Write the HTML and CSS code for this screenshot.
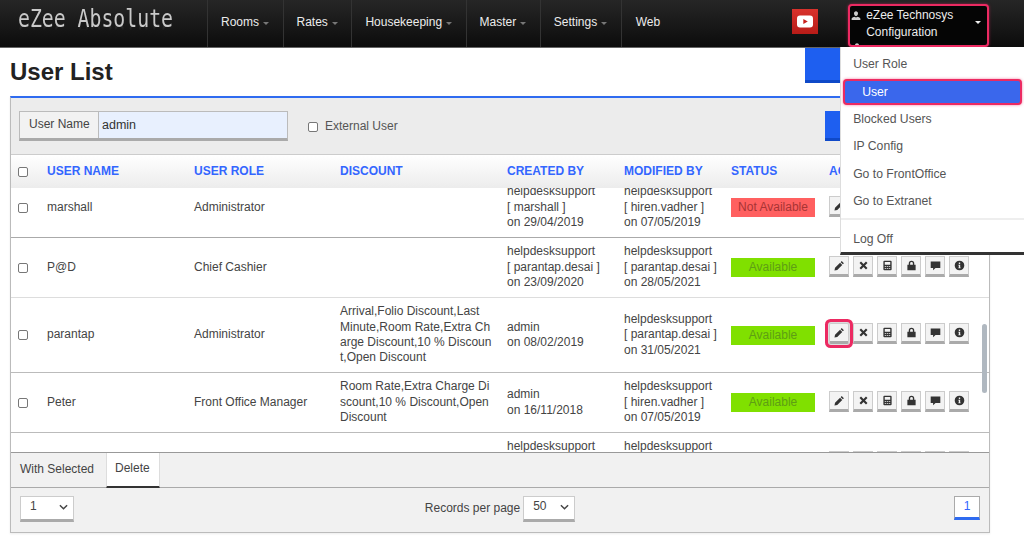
FILE: index.html
```html
<!DOCTYPE html>
<html lang="en">
<head>
<meta charset="utf-8">
<title>User List</title>
<link rel="stylesheet" href="styles.css">
</head>
<body>
<svg class="defs" width="0" height="0" aria-hidden="true">
  <symbol id="i-edit" viewBox="0 0 16 16"><path d="M11.2 1.6l3.2 3.2-1.5 1.5-3.2-3.2zM8.8 4l3.2 3.2-7.3 7.3-4 .8.8-4z"/></symbol>
  <symbol id="i-x" viewBox="0 0 16 16"><path d="M4.4 2.2L8 5.800l3.600-3.600 2.200 2.200L10.200 8l3.600 3.600-2.200 2.200L8 10.200l-3.600 3.600-2.200-2.200L5.800 8 2.200 4.400z"/></symbol>
  <symbol id="i-calc" viewBox="0 0 16 16"><path fill-rule="evenodd" d="M3.500 1h9A1.500 1.500 0 0 1 14 2.500v11a1.500 1.500 0 0 1-1.500 1.500h-9A1.500 1.500 0 0 1 2 13.500v-11A1.500 1.500 0 0 1 3.500 1zM4 3v4h8V3zM4 9v1.200h2V9zm3 0v1.200h2V9zm3 0v1.200h2V9zM4 11.500v1.200h2v-1.200zm3 0v1.200h2v-1.200zm3 0v1.200h2v-1.200z"/></symbol>
  <symbol id="i-lock" viewBox="0 0 16 16"><path fill-rule="evenodd" d="M4 7V5a4 4 0 0 1 8 0v2h2v8H2V7zm2 0h4V5a2 2 0 0 0-4 0z"/></symbol>
  <symbol id="i-chat" viewBox="0 0 16 16"><path d="M1 2h14v9.500H8l-3.500 3.500v-3.500H1z"/></symbol>
  <symbol id="i-info" viewBox="0 0 16 16"><path fill-rule="evenodd" d="M8 1a7 7 0 1 1 0 14A7 7 0 0 1 8 1zM7 3.500v2.200h2V3.500zM6.500 7v1.200H7v2.600h-.6V12h3.200v-1.200H9V7z"/></symbol>
  <symbol id="i-user" viewBox="0 0 16 16"><path d="M8 1c2 0 3.200 1.500 3.200 3.500S10 9 8 9 4.800 6.500 4.800 4.500 6 1 8 1zM1 15v-2c0-1.500 3-2.500 4.500-3.200.8.600 1.600.9 2.500.9s1.700-.3 2.500-.9C12 10.500 15 11.500 15 13v2z"/></symbol>
  <symbol id="i-chev" viewBox="0 0 10 6"><path d="M1 1l4 4 4-4" fill="none" stroke="currentColor" stroke-width="1.600"/></symbol>
</svg>

<header class="topbar">
  <div class="logo"><span class="logo-text">eZee Absolute</span></div>
  <nav class="nav">
    <a class="nav-item">Rooms<i class="caret"></i></a>
    <a class="nav-item">Rates<i class="caret"></i></a>
    <a class="nav-item">Housekeeping<i class="caret"></i></a>
    <a class="nav-item">Master<i class="caret"></i></a>
    <a class="nav-item">Settings<i class="caret"></i></a>
    <a class="nav-item nav-last">Web</a>
  </nav>
  <div class="yt">
    <svg viewBox="0 0 26 25" width="26" height="25"><rect x="5" y="6.500" width="16" height="12" rx="3" fill="#fff"/><path d="M11.300 10l4.500 2.500-4.500 2.500z" fill="#c8201c"/></svg>
  </div>
  <div class="user-menu">
    <div class="user-box">
      <svg class="user-icon"><use href="#i-user"/></svg>
      <div class="user-lines"><div>eZee Technosys</div><div>Configuration</div></div>
      <i class="user-caret"></i>
      <svg class="user-icon-clipped"><use href="#i-user"/></svg>
    </div>
    <ul class="dropdown">
      <li>User Role</li>
      <li class="active">User</li>
      <li>Blocked Users</li>
      <li>IP Config</li>
      <li>Go to FrontOffice</li>
      <li>Go to Extranet</li>
      <li class="sep">Log Off</li>
    </ul>
  </div>
</header>

<main class="main">
  <div class="title-row">
    <h1>User List</h1>
    <div class="add-btn"></div>
  </div>
  <section class="panel">
    <div class="filter">
      <div class="field"><span class="field-label">User Name</span><span class="field-input">admin</span></div>
      <label class="ext"><input type="checkbox" class="cb">External User</label>
      <div class="search-btn"></div>
    </div>
    <div class="row head">
      <div><input type="checkbox" class="cb"></div>
      <div>USER NAME</div><div>USER ROLE</div><div>DISCOUNT</div><div>CREATED BY</div><div>MODIFIED BY</div><div>STATUS</div><div>ACTION</div>
    </div>
    <div class="body">
      <div class="list">
        <div class="row">
          <div><input type="checkbox" class="cb"></div>
          <div>marshall</div><div>Administrator</div><div></div>
          <div>helpdesksupport<br>[ marshall ]<br>on 29/04/2019</div>
          <div>helpdesksupport<br>[ hiren.vadher ]<br>on 07/05/2019</div>
          <div><span class="status off">Not Available</span></div>
          <div class="acts"><span class="act"><svg><use href="#i-edit"/></svg></span><span class="act"><svg><use href="#i-x"/></svg></span><span class="act"><svg><use href="#i-calc"/></svg></span><span class="act"><svg><use href="#i-lock"/></svg></span><span class="act"><svg><use href="#i-chat"/></svg></span><span class="act"><svg><use href="#i-info"/></svg></span></div>
        </div>
        <div class="row">
          <div><input type="checkbox" class="cb"></div>
          <div>P@D</div><div>Chief Cashier</div><div></div>
          <div>helpdesksupport<br>[ parantap.desai ]<br>on 23/09/2020</div>
          <div>helpdesksupport<br>[ parantap.desai ]<br>on 28/05/2021</div>
          <div><span class="status on">Available</span></div>
          <div class="acts"><span class="act"><svg><use href="#i-edit"/></svg></span><span class="act"><svg><use href="#i-x"/></svg></span><span class="act"><svg><use href="#i-calc"/></svg></span><span class="act"><svg><use href="#i-lock"/></svg></span><span class="act"><svg><use href="#i-chat"/></svg></span><span class="act"><svg><use href="#i-info"/></svg></span></div>
        </div>
        <div class="row">
          <div><input type="checkbox" class="cb"></div>
          <div>parantap</div><div>Administrator</div>
          <div>Arrival,Folio Discount,Last<br>Minute,Room Rate,Extra Ch<br>arge Discount,10 % Discoun<br>t,Open Discount</div>
          <div>admin<br>on 08/02/2019</div>
          <div>helpdesksupport<br>[ parantap.desai ]<br>on 31/05/2021</div>
          <div><span class="status on">Available</span></div>
          <div class="acts"><span class="act hl"><svg><use href="#i-edit"/></svg></span><span class="act"><svg><use href="#i-x"/></svg></span><span class="act"><svg><use href="#i-calc"/></svg></span><span class="act"><svg><use href="#i-lock"/></svg></span><span class="act"><svg><use href="#i-chat"/></svg></span><span class="act"><svg><use href="#i-info"/></svg></span></div>
        </div>
        <div class="row">
          <div><input type="checkbox" class="cb"></div>
          <div>Peter</div><div>Front Office Manager</div>
          <div>Room Rate,Extra Charge Di<br>scount,10 % Discount,Open<br>Discount</div>
          <div>admin<br>on 16/11/2018</div>
          <div>helpdesksupport<br>[ hiren.vadher ]<br>on 07/05/2019</div>
          <div><span class="status on">Available</span></div>
          <div class="acts"><span class="act"><svg><use href="#i-edit"/></svg></span><span class="act"><svg><use href="#i-x"/></svg></span><span class="act"><svg><use href="#i-calc"/></svg></span><span class="act"><svg><use href="#i-lock"/></svg></span><span class="act"><svg><use href="#i-chat"/></svg></span><span class="act"><svg><use href="#i-info"/></svg></span></div>
        </div>
        <div class="row">
          <div></div><div></div><div></div><div></div>
          <div>helpdesksupport<br><br><br></div>
          <div>helpdesksupport<br><br><br></div>
          <div></div>
          <div class="acts"><span class="act"></span><span class="act"></span><span class="act"></span><span class="act"></span><span class="act"></span><span class="act"></span></div>
        </div>
      </div>
      <div class="scroll-thumb"></div>
    </div>
    <div class="bulk">
      <span class="bulk-label">With Selected</span>
      <span class="bulk-tab">Delete</span>
    </div>
    <div class="pager">
      <div class="select s-page"><span>1</span><svg class="chev"><use href="#i-chev"/></svg></div>
      <div class="records">Records per page<div class="select s-rec"><span>50</span><svg class="chev"><use href="#i-chev"/></svg></div></div>
      <div class="pages"><span class="page">1</span></div>
    </div>
  </section>
</main>
</body>
</html>
```
FILE: styles.css
```css
* { box-sizing: border-box; }
html, body { margin: 0; height: 537px; overflow: hidden; background: #fff; }
body { font: 12px/15.4px "Liberation Sans", Arial, sans-serif; color: #444; }
.defs { position: absolute; }

/* top bar */
.topbar {
  display: flex; align-items: stretch; height: 48px;
  background: linear-gradient(#262626, #0c0c0c);
  border-bottom: 1px solid #666;
}
.logo { width: 207px; padding: 5px 0 0 18px; }
.logo-text {
  display: block; width: 200px; font: 24px/28px "DejaVu Sans Mono", monospace; color: #c9c9c9;
  transform: scaleX(.825); transform-origin: left top;
  -webkit-box-reflect: below -15px linear-gradient(transparent 55%, rgba(255,255,255,.3));
}
.nav { display: flex; }
.nav-item {
  display: flex; align-items: center; padding: 0 13.500px 2px 13px;
  border-left: 1px solid #333; color: #ececec; font-size: 12px;
}
.caret {
  width: 0; height: 0; margin: 2px 0 0 4px;
  border: 3px solid transparent; border-top-color: #777; border-bottom: 0;
}
.nav-last { padding-right: 0; padding-left: 14px; }
.yt {
  width: 26px; height: 25px; margin: 9px 0 0 132px;
  background: linear-gradient(#d8322c, #b81c18);
}
.user-menu { position: relative; margin-left: 30px; width: 141px; }
.user-box {
  position: relative; overflow: hidden;
  display: flex; align-items: flex-start; height: 43px; margin-top: 4px;
  padding: 0 6px 0 0; background: #050505;
  border: 2px solid #ec2a62; border-radius: 4px;
  color: #ececec; font-size: 12px; line-height: 16.500px;
  box-shadow: 0 0 3px rgba(236,42,98,.6);
}
.user-icon { flex: none; width: 10px; height: 11px; fill: #ccc; margin: 4px 5px 0 1px; }
.user-lines { flex: 1; padding-top: 1px; }
.user-caret {
  width: 0; height: 0; margin-top: 15px;
  border: 3.500px solid transparent; border-top-color: #eee; border-bottom: 0;
}
.user-icon-clipped { position: absolute; left: 2px; top: 36px; width: 10px; height: 11px; fill: #ccc; }
.dropdown {
  position: absolute; z-index: 5; left: -8px; top: 47px; width: 184px; height: 208px;
  margin: 0; padding: 4px 0 0; list-style: none; background: #fff;
  border-bottom: 3px solid #333; border-left: 1px solid #ddd;
  font-size: 12.200px; color: #555;
}
.dropdown li { height: 27.200px; line-height: 27.200px; padding-left: 12px; }
.dropdown .active {
  height: 26px; line-height: 22px; margin: 1px 2px 1px 2px; padding-left: 17px;
  background: #3a67ec; color: #fff;
  border: 2px solid #ec2a62; border-radius: 4px;
  box-shadow: 0 0 3px rgba(236,42,98,.6);
}
.dropdown .sep { margin-top: 3px; border-top: 2px solid #eee; padding-top: 6px; height: 36px; }

/* main */
.main { padding-left: 10px; }
.title-row { display: flex; justify-content: space-between; height: 48px; }
h1 { margin: 0; font: bold 24px/48px "Liberation Sans", Arial, sans-serif; color: #222; }
.add-btn { width: 180px; height: 35px; margin-right: 39px; background: #1e5ff0; border-bottom: 3px solid #0f49c8; }

.panel {
  width: 980px; height: 437px; display: flex; flex-direction: column;
  border: 1px solid #bbb; border-top: 2px solid #2f6bf0;
  background: #fff;
  box-shadow: 0 1px 2px rgba(0,0,0,.08);
}
.filter {
  display: flex; flex: none; align-items: flex-start; height: 57px; padding: 13px 8px 0;
  background: #ececec; border-bottom: 1px solid #ccc;
}
.field {
  display: flex; width: 269px; height: 30px;
  border: 1px solid #bbb; border-bottom: 3px solid #aaa; background: #f2f2f2;
}
.field-label { width: 79px; padding: 5px 0 0 9px; border-right: 1px solid #bbb; color: #444; }
.field-input { flex: 1; padding: 6px 0 0 3px; background: #e8f0fe; color: #333; font-size: 12.500px; }
.ext { display: flex; align-items: center; gap: 7px; margin: 8px 0 0 20px; color: #555; }
.cb {
  appearance: none; display: block; width: 10px; height: 10px; margin: 0;
  background: #fff; border: 1px solid #777; border-radius: 2px;
}
.search-btn { width: 120px; height: 30px; margin-left: auto; margin-right: 36px; background: #1e5ff0; border-bottom: 3px solid #0f49c8; }

.row {
  display: grid; grid-template-columns: 29px 147px 146px 167px 117px 107px 98px 160px;
  align-items: center; height: 60px; padding-left: 7px;
  border-bottom: 1px solid #bbb; color: #444;
}
.list .row:nth-child(3) { height: 75px; }
.list .row:nth-child(1) { border-bottom-color: #aaa; }
.list .row:nth-child(2) { border-bottom-color: #ddd; }
.head {
  height: 33px; border-bottom: 0; flex: none;
  background: linear-gradient(#fff, #ececec);
  color: #3366ff; font-weight: bold; font-size: 12px;
}
.body { position: relative; flex: 1; overflow: hidden; min-height: 0; }
.list { margin-top: -10px; }
.status {
  display: block; width: 84px; height: 19px; line-height: 19px; text-align: center;
}
.status.on { background: #80e000; color: #5e9e14; }
.status.off { background: #ff6060; color: #a83434; }
.acts { display: flex; gap: 4px; margin-bottom: 3px; }
.act {
  display: flex; align-items: center; justify-content: center; flex: none;
  width: 20px; height: 21px;
  background: #f3f3f3; border: 1px solid #ccc; border-bottom: 3px solid #aaa;
}
.act svg { width: 11px; height: 11px; fill: #333; }
.act.hl { border-radius: 2px; box-shadow: 0 0 0 1px #ddd, 0 0 0 4px #ec2a62; }
.scroll-thumb {
  position: absolute; left: 971px; top: 136px; width: 5px; height: 69px;
  border-radius: 3px; background: #b0b8c0;
}

.bulk {
  display: flex; height: 36px; flex: none; background: #f1f1f1;
  border-top: 1px solid #999; border-bottom: 1px solid #aaa;
}
.bulk-label { width: 95px; padding: 9px 0 0 9px; color: #444; }
.bulk-tab {
  width: 54px; height: 35px; padding: 8px 0 0 8px; background: #fff; color: #444;
  border-left: 1px solid #ddd; border-right: 1px solid #ddd; border-bottom: 2px solid #333;
}
.pager {
  flex: none; height: 44px; display: grid; grid-template-columns: 1fr auto 1fr; align-items: start;
  padding: 8px 9px 0; background: #f1f1f1;
}
.select {
  display: flex; align-items: center; justify-content: space-between;
  height: 26px; padding: 0 5px 2px 9px; background: #fff;
  border: 1px solid #ccc; border-bottom: 3px solid #aaa;
}
.s-page { width: 54px; }
.s-rec { width: 52px; margin-left: 3px; }
.chev { width: 9px; height: 6px; color: #444; }
.records { display: flex; align-items: center; color: #444; }
.pages { display: flex; justify-content: flex-end; }
.page {
  display: block; width: 26px; height: 24px; line-height: 19px; text-align: center;
  background: #fff; color: #3366ff; border: 1px solid #aaa; border-bottom: 3px solid #2f6bf0;
}
```
